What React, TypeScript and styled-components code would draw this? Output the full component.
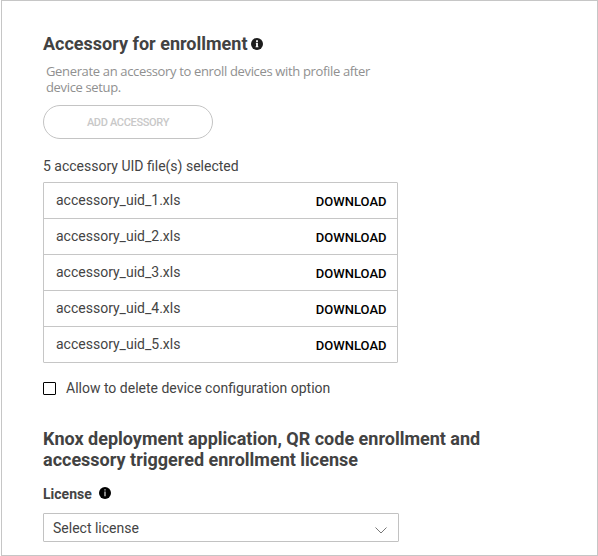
import React from "react";
import styled, { createGlobalStyle } from "styled-components";

const GlobalStyle = createGlobalStyle`
  * { box-sizing: border-box; }
  body { margin: 0; background: #fff; font-family: Roboto, sans-serif; color: #444; }
`;
const Page = styled.main`
  width: 597px; height: 556px; margin-left: 1px; border: 1px solid #c6c6c6; padding: 32px 41px 0;
  display: flex; flex-direction: column; align-items: flex-start; overflow: hidden;
`;
const Heading = styled.h2<{ $top?: number }>`
  margin: ${p => p.$top ?? 0}px 0 0; font-size: 18px; line-height: 21px; font-weight: 700;
  display: flex; align-items: center; gap: 3px; color: #424242;
`;
const Hint = styled.p`
  margin: 9px 0 0 3px; width: 335px; font: 13px/16px "Open Sans", sans-serif;
  letter-spacing: -0.345px; color: #909090;
`;
const AddButton = styled.button`
  margin-top: 10px; width: 170px; height: 34px; border: 1px solid #c4c4c4; border-radius: 17px;
  background: #fff; color: #c8c8c8; font: 500 11px Roboto, sans-serif; letter-spacing: -0.33px; padding: 0;
`;
const Summary = styled.p`
  margin: 19px 0 0; font-size: 14px; line-height: 17px;
`;
const FileList = styled.ul`
  list-style: none; margin: 7px 0 0; padding: 0; width: 355px; border: 1px solid #c6c6c6; border-radius: 1px;
`;
const FileRow = styled.li`
  height: 36px; display: flex; align-items: center; justify-content: space-between;
  padding: 0 10.5px 2px 12px; font-size: 14px;
  &:not(:last-child) { border-bottom: 1px solid #c6c6c6; }
  &:last-child { height: 35px; }
`;
const Download = styled.a`
  font-size: 13px; font-weight: 500; color: #000; padding-top: 3px;
`;
const Option = styled.label`
  margin-top: 17px; display: flex; align-items: center; gap: 10px; font-size: 14px; line-height: 17px;
`;
const Box = styled.span`
  width: 13px; height: 13px; border: 1px solid #000; border-radius: 1px;
`;
const Label = styled.div`
  margin-top: 16px; display: flex; align-items: center; gap: 7px; font-size: 14px; line-height: 16px; font-weight: 700;
  svg { margin-bottom: 2px; }
`;
const Select = styled.div`
  margin-top: 11px; width: 356px; height: 29px; border: 1px solid #c2c2c2; border-radius: 1px; padding: 0 11px 0 9px;
  display: flex; align-items: center; justify-content: space-between; font-size: 14px;
  svg { margin-top: 6px; }
`;
const Info = ({ thin = false }: { thin?: boolean }) => (
  <svg width="12" height="12" viewBox="0 0 12 12">
    <circle cx="6" cy="6" r="6" fill={thin ? "#000" : "#1c1c1c"} />
    {thin
      ? <path d="M5.4 2.3h1.2v1.2H5.4zM5.4 4.4h1.2v4.8H5.4z" fill="#ddd" />
      : <path d="M5.1 2.3h1.8v1.6H5.1zM4.8 4.8h2.1v3.6h.6v.8h-3v-.8h.6V5.600h-.3z" fill="#fff" />}
  </svg>
);
const files = [1, 2, 3, 4, 5].map(n => `accessory_uid_${n}.xls`);

export default function App() {
  return (
    <Page>
      <GlobalStyle />
      <Heading>Accessory for enrollment<Info /></Heading>
      <Hint>Generate an accessory to enroll devices with profile after device setup.</Hint>
      <AddButton>ADD ACCESSORY</AddButton>
      <Summary>5 accessory UID file(s) selected</Summary>
      <FileList>
        {files.map(f => <FileRow key={f}><span>{f}</span><Download>DOWNLOAD</Download></FileRow>)}
      </FileList>
      <Option><Box />Allow to delete device configuration option</Option>
      <Heading $top={31}>Knox deployment application, QR code enrollment and<br />accessory triggered enrollment license</Heading>
      <Label>License<Info thin /></Label>
      <Select>
        <span>Select license</span>
        <svg width="12" height="7" viewBox="0 0 12 7" fill="none" stroke="#777"><path d="M.5.5 6 6 11.5.5" /></svg>
      </Select>
    </Page>
  );
}
